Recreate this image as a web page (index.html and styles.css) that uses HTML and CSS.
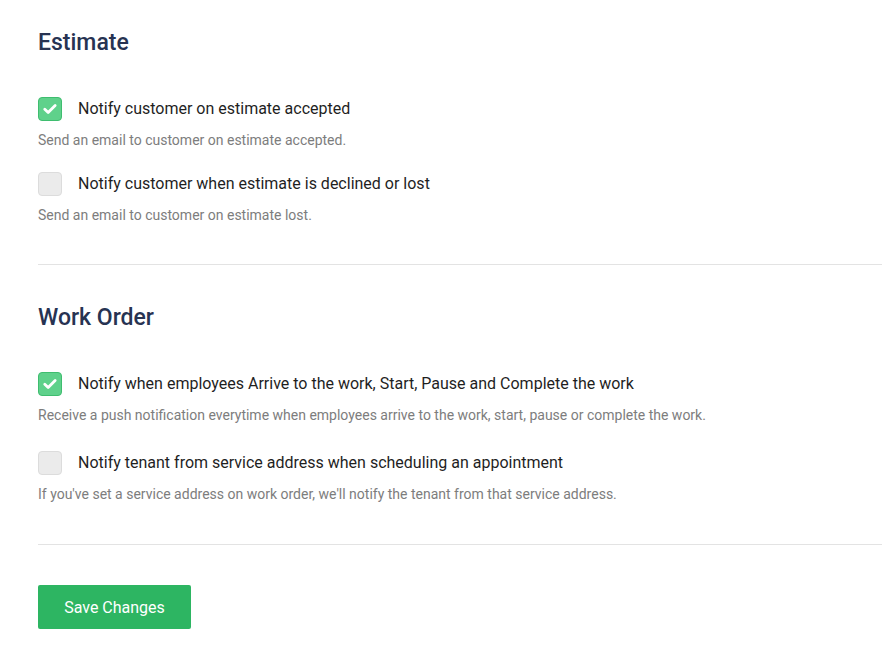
FILE: index.html
```html
<!DOCTYPE html>
<html>
<head>
<meta charset="utf-8">
<link rel="stylesheet" href="styles.css">
</head>
<body>
<div class="page">
  <section class="section">
    <h2 class="title">Estimate</h2>
    <div class="option">
      <label class="opt-row"><span class="check checked"><svg viewBox="0 0 24 24" width="24" height="24"><path d="M6.3 12.2l3.7 3.6 7.6-7.5" fill="none" stroke="#fff" stroke-width="3.1" stroke-linecap="round" stroke-linejoin="round"/></svg></span><span class="label">Notify customer on estimate accepted</span></label>
      <p class="desc">Send an email to customer on estimate accepted.</p>
    </div>
    <div class="option">
      <label class="opt-row"><span class="check"></span><span class="label">Notify customer when estimate is declined or lost</span></label>
      <p class="desc">Send an email to customer on estimate lost.</p>
    </div>
  </section>
  <section class="section section-wo">
    <h2 class="title">Work Order</h2>
    <div class="option">
      <label class="opt-row"><span class="check checked"><svg viewBox="0 0 24 24" width="24" height="24"><path d="M6.3 12.2l3.7 3.6 7.6-7.5" fill="none" stroke="#fff" stroke-width="3.1" stroke-linecap="round" stroke-linejoin="round"/></svg></span><span class="label">Notify when employees Arrive to the work, Start, Pause and Complete the work</span></label>
      <p class="desc">Receive a push notification everytime when employees arrive to the work, start, pause or complete the work.</p>
    </div>
    <div class="option">
      <label class="opt-row"><span class="check"></span><span class="label">Notify tenant from service address when scheduling an appointment</span></label>
      <p class="desc">If you've set a service address on work order, we'll notify the tenant from that service address.</p>
    </div>
  </section>
  <div class="actions">
    <button class="btn">Save Changes</button>
  </div>
</div>
</body>
</html>
```

FILE: styles.css
```css
* { box-sizing: border-box; }
html, body { margin: 0; padding: 0; background: #fff; }
body { font-family: Roboto, "Noto Sans", sans-serif; color: #222; }
.page { padding: 29px 0 0 38px; }
.section { border-bottom: 1px solid #e3e3e3; padding-bottom: 39px; margin-bottom: 39px; }
.section-wo { padding-bottom: 40px; margin-bottom: 40px; }
.title { margin: 0 0 41px; font-size: 23px; line-height: 27px; font-weight: 500; color: #273352; }
.option { margin-bottom: 22px; }
.section-wo .option { margin-bottom: 26px; }
.option:last-child, .section-wo .option:last-child { margin-bottom: 0; }
.opt-row { display: flex; align-items: center; gap: 16px; cursor: pointer; }
.check { width: 24px; height: 24px; border-radius: 4px; background: #ebebeb; border: 1px solid #dcdcdc; display: flex; align-items: center; justify-content: center; flex: none; }
.check svg { display: block; }
.check.checked { background: #5fd18b; border-color: #3fbd6f; }
.label { font-size: 16px; line-height: 24px; color: #1f1f1f; }
.desc { margin: 9px 0 0; font-size: 14px; line-height: 20px; color: #7d7d7d; }
.btn { width: 153px; height: 44px; border: none; border-radius: 2px; background: #2db562; color: #fff; font-family: Roboto, sans-serif; font-size: 16px; cursor: pointer; padding: 0; display: block; }
```
